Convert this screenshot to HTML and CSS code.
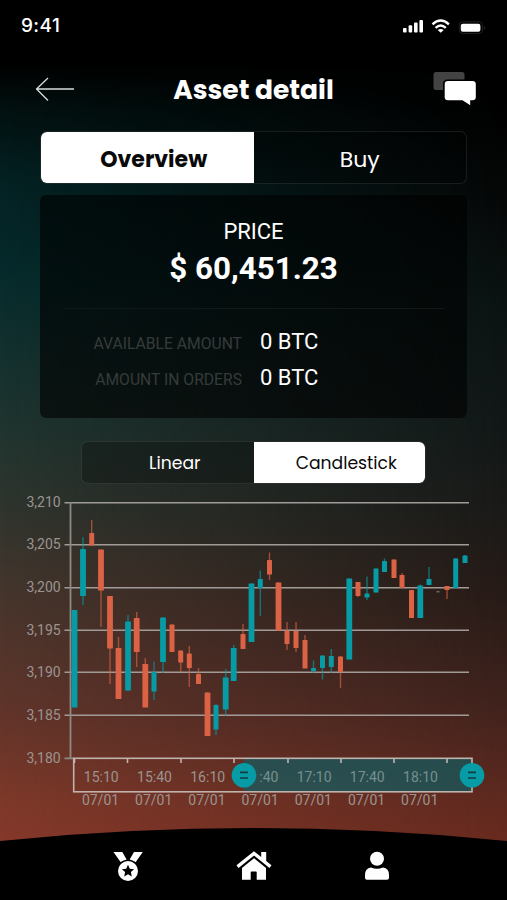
FILE: index.html
```
<!DOCTYPE html>
<html lang="en">
<head>
<meta charset="UTF-8" />
<meta name="viewport" content="width=device-width, initial-scale=1" />
<title>Asset detail</title>
<link rel="stylesheet" href="styles.css">
</head>
<body>
  <div class="screen">
    <div class="status-bar">
      <span class="time">9:41</span>
      <svg class="status-icons" width="86" height="20" viewBox="400 16 86 20" fill="#fff">
        <rect x="403" y="28" width="3.6" height="4.5" rx="1"/>
        <rect x="408.6" y="25.3" width="3.6" height="7.2" rx="1"/>
        <rect x="414" y="22.6" width="3.6" height="9.9" rx="1"/>
        <rect x="419.4" y="20" width="3.6" height="12.5" rx="1"/>
        <g fill="none" stroke="#fff" stroke-width="2.4">
          <path d="M432.5 24.3q8.2-7.6 16.4 0"/>
          <path d="M435.6 27.8q5.1-4.6 10.2 0"/>
        </g>
        <path d="M437.7 30q3-2.2 6 0l-3 2.8z"/>
        <rect x="459.2" y="21.8" width="23.4" height="11.6" rx="3.5" fill="none" stroke="#222"/>
        <rect x="460.8" y="23.7" width="19.6" height="8" rx="2"/>
        <path d="M484 26v4q1.5-2 0-4z" fill="#444"/>
      </svg>
    </div>

    <header>
      <button class="back" aria-label="Back">
        <svg width="40" height="26" viewBox="0 0 40 26" fill="none" stroke="#d8dcdc" stroke-width="1.3">
          <path d="M39 13H2M13 2L1.500 13L13 24.500"/>
        </svg>
      </button>
      <h1>Asset detail</h1>
      <button class="chat" aria-label="Messages">
        <svg width="44" height="36" viewBox="432 70 44 36">
          <path d="M436 72h26q2.500 0 2.500 2.500v5h-17q-4.500 0-4.500 4.500v6h-7q-2.500 0-2.500-2.500v-13q0-2.500 2.500-2.500z" fill="#434343"/>
          <path d="M448 81h24.500q3.300 0 3.300 3.300v12.600q0 3.300-3.300 3.300h-2.300v5l-7.700-5H448q-3.300 0-3.300-3.300V84.300q0-3.300 3.300-3.300z" fill="#fff"/>
        </svg>
      </button>
    </header>

    <div class="tabs main-tabs">
      <button class="tab active">Overview</button>
      <button class="tab">Buy</button>
    </div>

    <section class="card">
      <p class="price-label">PRICE</p>
      <p class="price">$ 60,451.23</p>
      <dl class="amounts">
        <dt>AVAILABLE AMOUNT</dt><dd>0 BTC</dd>
        <dt>AMOUNT IN ORDERS</dt><dd>0 BTC</dd>
      </dl>
    </section>

    <div class="tabs chart-tabs">
      <button class="tab">Linear</button>
      <button class="tab active">Candlestick</button>
    </div>

    <svg class="chart" id="chart" width="507" height="325" viewBox="0 490 507 325"></svg>

    <nav>
      <a class="nav-item" href="#" aria-label="Awards">
        <svg width="30" height="30" viewBox="0 0 30 30" fill="#fff">
          <path d="M.5 1H9.300l4.300 7.500-5.900 2.700zM29.800 1H21l-4.300 7.500 5.900 2.700z"/>
          <circle cx="15" cy="20" r="11.300" fill="#000"/>
          <circle cx="15" cy="20" r="10"/>
          <path d="M15 13.800l1.800 4 4.300.4-3.200 2.900.9 4.300-3.800-2.200-3.800 2.200.9-4.300-3.200-2.900 4.300-.4z" fill="#000"/>
        </svg>
      </a>
      <a class="nav-item" href="#" aria-label="Home">
        <svg width="36" height="30" viewBox="0 0 36 30" fill="#fff">
          <path d="M18 6L6 16.500V28.700h8.700v-7.500q0-.8.800-.8h4.400q.8 0 .8.800v7.500H30V16.500z"/>
          <path d="M1.500 16.600L18 3.400l16.500 13.200" fill="none" stroke="#000" stroke-width="6"/>
          <path d="M25.200 1h5v11l-5-4z"/>
          <path d="M1.500 15.600L18 2.400l16.500 13.200" fill="none" stroke="#fff" stroke-width="3.300"/>
        </svg>
      </a>
      <a class="nav-item" href="#" aria-label="Profile">
        <svg width="26" height="30" viewBox="0 0 26 30" fill="#fff">
          <circle cx="13" cy="7.800" r="7"/>
          <path d="M7 16.500q6 2.500 12 0 6 .5 6 7.500v2.700q0 2-2 2H3q-2 0-2-2V24q0-7 6-7.500z"/>
        </svg>
      </a>
    </nav>
  </div>

<script src="chart.js"></script>
</body>
</html>
```
FILE: styles.css
```
:root {
  --accent: #079ba6;
  --down: #db6245;
  --title-font: Poppins, Inter, sans-serif;
  --text-font: Roboto, sans-serif;
}

* {
  box-sizing: border-box;
}

body {
  margin: 0;
  background: #000;
  color: #fff;
  font-family: var(--text-font);
}

.screen {
  position: relative;
  width: 507px;
  height: 900px;
  overflow: hidden;
  display: flex;
  flex-direction: column;
  align-items: center;
  isolation: isolate;
  background: linear-gradient(#000 0, #000 90px, #060707 190px, #0b1312 300px, #121817 430px, #1a1a18 510px, #281b17 600px, #42231d 710px, #5f291f 800px, #692a1e 840px);
}

/* teal to rust glow coming from the left edge */
.screen::before {
  content: "";
  position: absolute;
  inset: 0;
  z-index: -1;
  background: linear-gradient(#000 0, #000 65px, #021010 110px, #032122 180px, #052a2b 270px, #12302e 350px, #20342f 430px, #2f342d 510px, #46352c 600px, #60342a 710px, #7c3829 800px, #84382a 840px);
  -webkit-mask-image: linear-gradient(to right, #000, transparent);
  mask-image: linear-gradient(to right, #000, transparent);
}

button {
  padding: 0;
  border: none;
  background: none;
  color: inherit;
  cursor: pointer;
}

svg {
  display: block;
}

.status-bar {
  width: 100%;
  height: 60px;
  padding: 15px 21px 0;
  display: flex;
  justify-content: space-between;
}

.time {
  font: 500 19px/21px Inter, sans-serif;
  letter-spacing: 0.4px;
}

.status-icons {
  margin-top: 1px;
}

header {
  width: 100%;
  height: 71px;
  padding: 0 31px 0 35px;
  display: grid;
  grid-template-columns: 40px 1fr 44px;
}

.back {
  align-self: start;
  margin-top: 16px;
}

.chat {
  align-self: start;
  margin-top: 10px;
}

h1 {
  margin: 10px 0 0;
  font: 700 26.5px/40px var(--title-font);
  text-align: center;
}

.tabs {
  display: grid;
  grid-template-columns: 1fr 1fr;
  flex: none;
  border: 1px solid rgba(255, 255, 255, 0.09);
  border-radius: 7px;
  background: rgba(0, 0, 0, 0.25);
  overflow: hidden;
}

.tab {
  font-family: var(--title-font);
}

.tab.active {
  background: #fff;
  color: #090909;
}

.main-tabs {
  width: 427px;
  height: 53px;
}

.main-tabs .tab {
  padding-top: 3px;
  font-size: 22px;
}

.main-tabs .active {
  padding-left: 13px;
  font-weight: 700;
}

.card {
  flex: none;
  width: 427px;
  height: 223px;
  margin-top: 11px;
  padding: 23px 23px 0;
  border-radius: 6px;
  background: rgba(0, 0, 0, 0.6);
}

.price-label {
  margin: 0;
  font-size: 22px;
  line-height: 28px;
  text-align: center;
}

.price {
  margin: 4px 0 0;
  font-size: 31.4px;
  font-weight: 700;
  line-height: 38px;
  text-align: center;
}

.amounts {
  height: 100px;
  margin: 20px 0 0;
  padding-top: 15px;
  border-top: 1px solid #101918;
  display: grid;
  grid-template-columns: 179px 1fr;
  grid-auto-rows: 36px;
  column-gap: 18px;
}

.amounts dt {
  font-size: 15.7px;
  line-height: 39px;
  text-align: right;
  color: #353b3b;
}

.amounts dd {
  margin: 0;
  font-size: 22px;
  line-height: 36px;
}

.chart-tabs {
  width: 345px;
  height: 43px;
  margin-top: 23px;
}

.chart-tabs .tab {
  padding-top: 1px;
  padding-left: 14px;
  font-size: 17.2px;
}

.chart {
  flex: none;
  margin-top: 6px;
}

.grid {
  stroke: #a09b97;
  stroke-width: 1.6;
}

.axis {
  fill: none;
  stroke: #8e8985;
  stroke-width: 1.8;
}

.frame {
  fill: none;
  stroke: #c0b3ae;
  stroke-width: 1.6;
}

.chart text {
  font-size: 14px;
  fill: #9b9490;
}

.chart .time-label {
  text-anchor: middle;
}

.chart .in-range {
  fill: #76908f;
}

.chart .y-label {
  text-anchor: end;
}

.up {
  fill: var(--accent);
  stroke: var(--accent);
}

.down {
  fill: var(--down);
  stroke: var(--down);
}

.body {
  stroke: none;
}

.wick {
  opacity: 0.65;
  stroke-width: 1.4;
}

.range {
  fill: #08636b;
  fill-opacity: 0.62;
}

.handle {
  fill: var(--accent);
}

.grip {
  stroke: #123c40;
  stroke-width: 1.7;
}

nav {
  flex: none;
  width: 100%;
  height: 72px;
  margin-top: 13px;
  padding: 23px 0 0;
  display: grid;
  grid-template-columns: 130px 123px 123px;
  justify-content: center;
  justify-items: center;
  background: #000;
  clip-path: circle(2470px at 50% 2470px);
}

.nav-item {
  position: relative;
  left: -3px;
}
```
FILE: chart.js
```
const chart = document.getElementById("chart");

// x centre, direction, body top, body bottom, wick top, wick bottom
const candles = [
  [74.5, "up", 610, 707.5, 610, 707.5],
  [83, "up", 549, 596, 537, 605],
  [91.7, "down", 533, 545.5, 520, 546],
  [101, "down", 549.5, 590.5, 549.5, 627],
  [110, "down", 596, 648.5, 596, 684],
  [118.5, "down", 648, 699, 637, 699],
  [128, "up", 621.5, 690.5, 615, 691],
  [136.7, "down", 618, 652, 612, 667],
  [145.3, "down", 664, 707.5, 658, 707],
  [154, "up", 672, 691.5, 661.5, 700],
  [163, "up", 617.5, 662, 617.5, 673],
  [172, "down", 624.5, 652, 624.5, 652],
  [180.7, "down", 650.5, 662.5, 650.5, 672],
  [189.3, "down", 653.5, 668, 646, 687],
  [198.5, "down", 674, 684, 668, 684],
  [207.5, "down", 692.5, 736, 692.5, 736],
  [216, "up", 705, 729.5, 704, 735],
  [225.7, "up", 677.5, 709.5, 669, 716],
  [233.7, "up", 648, 681, 645, 681],
  [243, "down", 634, 649, 624, 649],
  [251.5, "up", 583.5, 642, 583.5, 642],
  [260.3, "up", 579, 588, 570.5, 616],
  [269.5, "down", 560, 574.5, 552.5, 580],
  [278.5, "down", 582.5, 630.5, 582.5, 630.5],
  [287, "down", 630.5, 644, 622, 650],
  [296, "down", 631, 648, 622, 652],
  [305, "down", 640, 668.5, 635, 668],
  [313.5, "up", 668, 671, 660.5, 673],
  [322.5, "up", 655.5, 668, 655.5, 679.5],
  [331.3, "up", 656, 667, 649, 673],
  [340.5, "down", 656.5, 672, 656, 688],
  [349.3, "up", 578.5, 659.5, 578.5, 659.5],
  [358, "down", 582, 596, 582, 597],
  [367, "up", 593.5, 597.5, 576.5, 600],
  [376, "up", 568.5, 592.5, 568.5, 592.5],
  [384.5, "up", 561, 572, 558.5, 572],
  [394, "down", 559.5, 578, 559.5, 578],
  [402, "down", 575, 588, 573, 588],
  [411.5, "down", 590, 618, 590, 618],
  [420.3, "up", 585.5, 618, 584.5, 618],
  [429, "up", 579, 585, 567, 585],
  [447, "down", 586, 590, 586, 599],
  [455.7, "up", 558.5, 588, 558, 588],
  [465, "up", 555.5, 563, 555, 563]
];

const yLabels = ["3,210", "3,205", "3,200", "3,195", "3,190", "3,185", "3,180"];
const yLines = [502.7, 544.7, 587.7, 630.3, 672.3, 715.3, 758.3];
const times = ["15:10", "15:40", "16:10", ":40", "17:10", "17:40", "18:10"];

let out = "";

yLines.forEach((y, i) => {
  if (i < 6) out += `<line class="grid" x1="64.5" x2="469" y1="${y}" y2="${y}"/>`;
  out += `<text class="y-label" x="60.7" y="${y + 4.3}">${yLabels[i]}</text>`;
});
out += `<path class="axis" d="M70.5 502V758M64.5 758.3H74"/>`;

candles.forEach(([x, dir, top, bottom, high, low]) => {
  const w = bottom - top < 30 ? 5 : 5.8;
  out += `<g class="${dir}"><line class="wick" x1="${x}" x2="${x}" y1="${high}" y2="${low}"/>`;
  out += `<rect class="body" x="${x - w / 2}" y="${top}" width="${w}" height="${bottom - top}" rx="0.5"/></g>`;
});
out += `<rect x="436.5" y="591.3" width="3" height="1" fill="#8e8985"/>`;

// time axis
out += `<rect class="range" x="244" y="759" width="228" height="33"/>`;
times.forEach((t, i) => {
  const x = 101.3 + i * 53.2;
  const shift = i === 3 ? 8 : 0;
  out += `<text class="time-label${i > 2 ? " in-range" : ""}" x="${x + shift}" y="782.3">${t}</text>`;
  out += `<text class="time-label" x="${x - 0.8}" y="805">07/01</text>`;
});
out += `<rect class="frame" x="73.7" y="758.3" width="398.3" height="33.5"/>`;
[74.5, 127.5, 181, 234, 288, 341, 394, 447].forEach(x => {
  out += `<line class="frame" x1="${x}" x2="${x}" y1="758" y2="763"/>`;
});
[244, 472].forEach(x => {
  out += `<circle class="handle" cx="${x}" cy="775.3" r="12.3"/>`;
  out += `<path class="grip" d="M${x - 4} 772.3h8M${x - 4} 778h8"/>`;
});

chart.innerHTML = out;
```
